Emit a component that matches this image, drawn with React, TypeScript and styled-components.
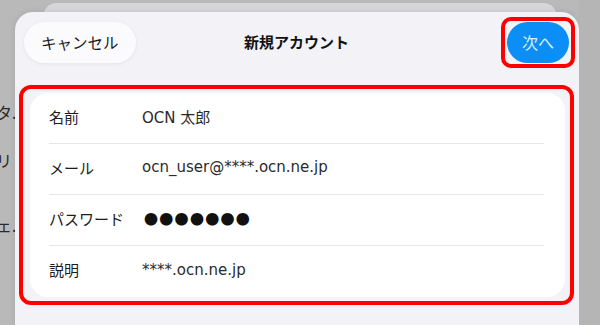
import styled, { createGlobalStyle } from 'styled-components';

const GlobalStyle = createGlobalStyle`
  html, body {
    margin: 0;
    padding: 0;
  }
  body {
    font-family: 'Noto Sans CJK JP', 'Noto Sans', sans-serif;
    color: #1c1c1e;
    -webkit-font-smoothing: antialiased;
  }
`;

const Screen = styled.div`
  display: flex;
  width: 600px;
  height: 325px;
  overflow: hidden;
  background: #b9b9b9;
`;

// list of the screen that lies under the sheet, only its right end shows
const SideList = styled.div`
  width: 15px;
  flex-shrink: 0;
  display: flex;
  flex-direction: column;
  padding-top: 102px;
  overflow: hidden;
`;

const SideItem = styled.div<{ $gap: number }>`
  height: 20px;
  line-height: 20px;
  margin-top: ${(p) => p.$gap}px;
  margin-left: -4px;
  font-size: 16px;
  white-space: nowrap;
  color: #2a2a2a;
`;

const Center = styled.div`
  flex: 1;
  display: flex;
  flex-direction: column;
  padding-top: 3px;
`;

const BackSheet = styled.div`
  height: 30px;
  margin: 0 22px 0 28px;
  background: #d7d7db;
  border-radius: 14px 14px 0 0;
`;

const Sheet = styled.div`
  flex: 1;
  margin-top: -21px;
  background: #f2f2f7;
  border-radius: 18px 18px 0 0;
  box-shadow: 0 0 6px rgba(0, 0, 0, 0.1);
  display: flex;
  flex-direction: column;
`;

const RightStrip = styled.div`
  width: 21px;
  flex-shrink: 0;
  background: #b5b5b5;
`;

const Header = styled.header`
  display: grid;
  grid-template-columns: 1fr auto 1fr;
  align-items: center;
  padding: 10px 10px 0 9px;
`;

const CancelButton = styled.button`
  justify-self: start;
  height: 41px;
  padding: 0 17px 2px;
  border: none;
  border-radius: 21px;
  background: #fbfbfd;
  box-shadow: 0 1px 4px rgba(0, 0, 0, 0.06);
  font-family: inherit;
  font-size: 15.5px;
  color: #1c1c1e;
`;

const Title = styled.h1`
  margin: 0 0 2px;
  font-size: 15px;
  font-weight: 700;
  color: #111;
`;

const Highlight = styled.div<{ $radius: number }>`
  border: 4px solid #ff0000;
  border-radius: ${(p) => p.$radius}px;
`;

const NextHighlight = styled(Highlight)`
  justify-self: end;
  padding: 1px 2px;
  margin: -5px -6px -5px 0;
`;

const NextButton = styled.button`
  display: block;
  height: 41px;
  padding: 0 15px 2px;
  border: none;
  border-radius: 21px;
  background: #0c8ef7;
  font-family: inherit;
  font-size: 16px;
  color: #dcf2ff;
`;

const FormHighlight = styled(Highlight)`
  margin: 22px 5px 0 4px;
  padding: 4px 5px 4px 7px;
`;

const Card = styled.div`
  background: #fff;
  border-radius: 18px;
`;

const Row = styled.div`
  display: flex;
  align-items: center;
  height: 51px;
  box-sizing: border-box;
  padding-bottom: 4px;
  margin: 0 21px 0 19px;
  border-bottom: 1px solid #e6e6ea;
  font-size: 15px;

  &:last-child {
    border-bottom: none;
  }
`;

const Label = styled.span`
  width: 93px;
  flex-shrink: 0;
  color: #1c1c1e;
`;

const Value = styled.span<{ $dots?: boolean }>`
  color: ${(p) => (p.$dots ? '#111' : '#2a2a2c')};
  font-family: ${(p) => (p.$dots ? "'Noto Sans CJK JP'" : "'DejaVu Sans', 'Noto Sans CJK JP'")}, sans-serif;
  font-size: ${(p) => (p.$dots ? '14px' : '15px')};
  letter-spacing: ${(p) => (p.$dots ? '1.3px' : '0')};
  margin-left: ${(p) => (p.$dots ? '2px' : '0')};
`;

const fields = [
  { label: '名前', value: 'OCN 太郎' },
  { label: 'メール', value: 'ocn_user@****.ocn.ne.jp' },
  { label: 'パスワード', value: '●●●●●●●', dots: true },
  { label: '説明', value: '****.ocn.ne.jp' },
];

export default function App() {
  return (
    <>
      <GlobalStyle />
      <Screen>
        <SideList>
          <SideItem $gap={0}>タ.</SideItem>
          <SideItem $gap={28}>リ</SideItem>
          <SideItem $gap={45}>ェ.</SideItem>
        </SideList>
        <Center>
          <BackSheet />
          <Sheet>
            <Header>
              <CancelButton>キャンセル</CancelButton>
              <Title>新規アカウント</Title>
              <NextHighlight $radius={10}>
                <NextButton>次へ</NextButton>
              </NextHighlight>
            </Header>
            <FormHighlight $radius={12}>
              <Card>
                {fields.map((f) => (
                  <Row key={f.label}>
                    <Label>{f.label}</Label>
                    <Value $dots={f.dots}>{f.value}</Value>
                  </Row>
                ))}
              </Card>
            </FormHighlight>
          </Sheet>
        </Center>
        <RightStrip />
      </Screen>
    </>
  );
}
